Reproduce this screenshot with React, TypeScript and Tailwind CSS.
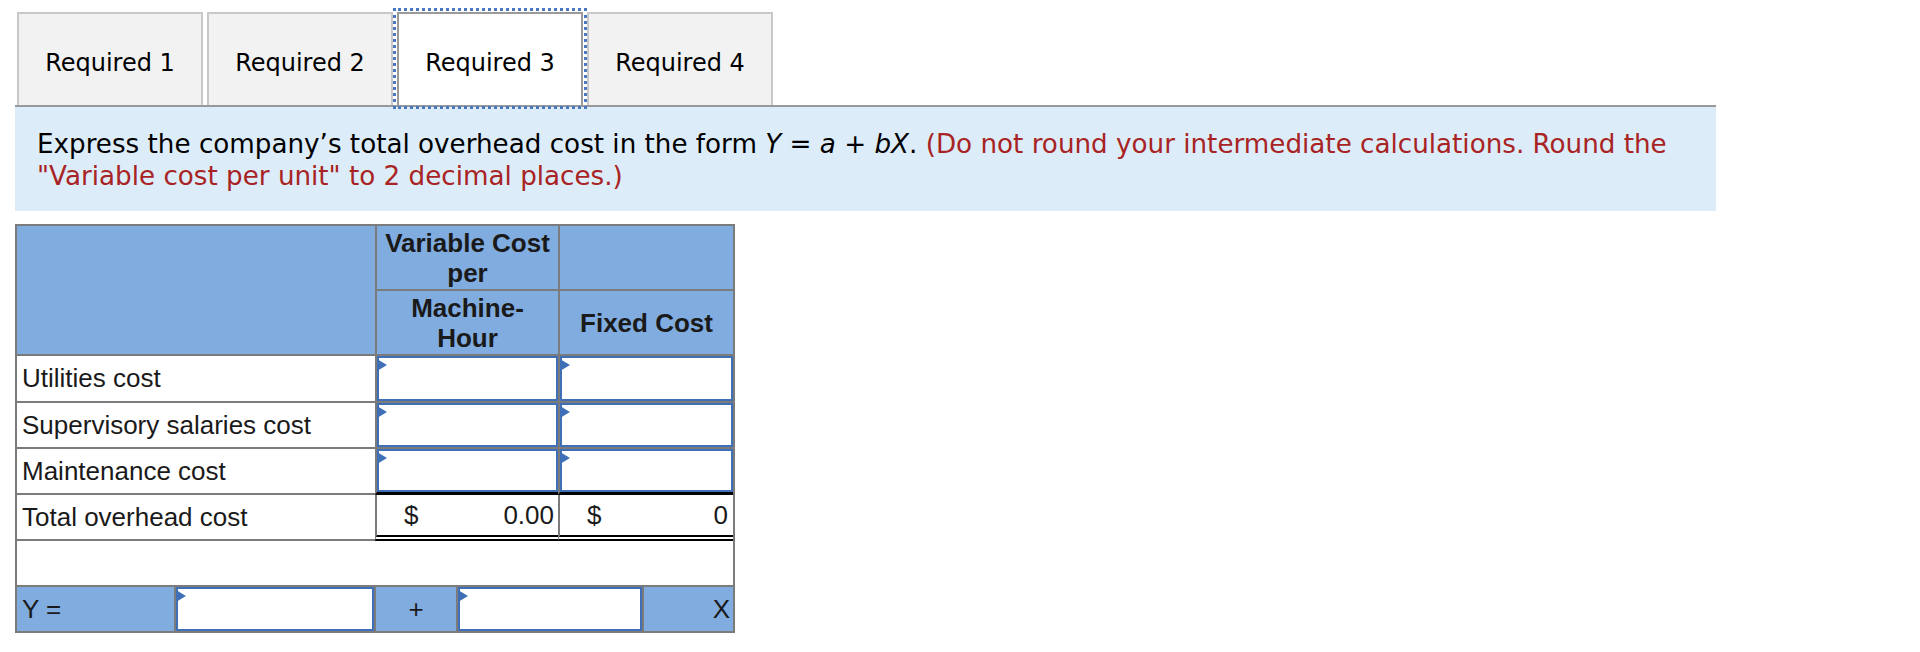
import React from "react";

const TABS = ["Required 1", "Required 2", "Required 3", "Required 4"];
const ROWS = ["Utilities cost", "Supervisory salaries cost", "Maintenance cost"];

function InputBox() {
  return (
    <div className="relative h-full w-full bg-white border-2 border-[#3f6fb6]">
      <span className="absolute -left-[2px] top-[1px] w-0 h-0 border-y-[6px] border-y-transparent border-l-[10px] border-l-[#3f6fb6]" />
    </div>
  );
}

export default function App() {
  return (
    <div className="min-h-screen bg-white pl-[15px] pt-[12px]">
      {/* tab strip */}
      <div className="w-[1701px]">
        <div className="flex gap-[4px] pl-[2px] border-b-2 border-[#999999]">
          {TABS.map((t, i) => (
            <div
              key={t}
              className={
                i === 2
                  ? "w-[186px] h-[93px] pt-[6px] flex items-center justify-center bg-white border-2 border-b-0 border-[#9a9a9a] outline-[3px] outline-dotted outline-[#4a78c0] outline-offset-[1px]"
                  : "w-[186px] h-[93px] pt-[6px] flex items-center justify-center bg-[#f2f2f2] border-2 border-b-0 border-[#c8c8c8]"
              }
            >
              <span className="font-['DejaVu_Sans',sans-serif] text-[24px] text-black">{t}</span>
            </div>
          ))}
        </div>

        {/* instructions */}
        <div className="bg-[#ddecf9] h-[104px] pl-[22px] pt-[21px] font-['DejaVu_Sans',sans-serif] text-[26.2px] leading-[32px] text-black">
          Express the company’s total overhead cost in the form <i>Y</i> = <i>a</i> + <i>bX</i>.{" "}
          <span className="text-[#a82424]">
            (Do not round your intermediate calculations. Round the
            <br />
            "Variable cost per unit" to 2 decimal places.)
          </span>
        </div>
      </div>

      {/* worksheet */}
      <div className="mt-[13px] w-[720px] border-2 border-[#7b7b7b] font-['Liberation_Sans',Arial,sans-serif] text-[26px] text-[#1a1a1a]">
        <div className="flex bg-[#80ace0] border-b-2 border-[#7b7b7b] font-bold leading-[30px] text-center">
          <div className="w-[358px]" />
          <div className="w-[183px] border-l-2 border-[#7b7b7b] flex flex-col">
            <div className="h-[63px] flex items-center justify-center">
              Variable Cost
              <br />
              per
            </div>
            <div className="h-[65px] border-t-2 border-[#7b7b7b] flex items-center justify-center">
              Machine-
              <br />
              Hour
            </div>
          </div>
          <div className="flex-1 border-l-2 border-[#7b7b7b] flex flex-col">
            <div className="h-[63px]" />
            <div className="h-[65px] border-t-2 border-[#7b7b7b] flex items-center justify-center">Fixed Cost</div>
          </div>
        </div>

        {ROWS.map((r, i) => {
          const last = i === ROWS.length - 1;
          const numBorder = last ? "border-b-[3px] border-b-black" : "border-b-2 border-b-[#7b7b7b]";
          return (
            <div key={r} className={i === 0 ? "flex h-[47px]" : "flex h-[46px]"}>
              <div className="w-[358px] border-b-2 border-[#7b7b7b] flex items-center pl-[5px]">{r}</div>
              <div className={`w-[183px] border-l-2 border-l-[#7b7b7b] ${numBorder}`}>
                <InputBox />
              </div>
              <div className={`flex-1 border-l-2 border-l-[#7b7b7b] ${numBorder}`}>
                <InputBox />
              </div>
            </div>
          );
        })}

        <div className="flex h-[46px]">
          <div className="w-[358px] border-b-2 border-[#7b7b7b] flex items-center pl-[5px]">Total overhead cost</div>
          <div className="w-[183px] border-l-2 border-l-[#7b7b7b] border-b-[6px] border-b-black border-double flex items-center justify-between pl-[27px] pr-[4px]">
            <span>$</span>
            <span>0.00</span>
          </div>
          <div className="flex-1 border-l-2 border-l-[#7b7b7b] border-b-[6px] border-b-black border-double flex items-center justify-between pl-[27px] pr-[5px]">
            <span>$</span>
            <span>0</span>
          </div>
        </div>

        <div className="h-[46px] border-b-2 border-[#7b7b7b]" />

        <div className="flex h-[44px] bg-[#80ace0]">
          <div className="w-[157px] flex items-center pl-[5px]">Y =</div>
          <div className="w-[200px] border-l-2 border-[#7b7b7b]">
            <InputBox />
          </div>
          <div className="w-[82px] border-l-2 border-[#7b7b7b] flex items-center justify-center">+</div>
          <div className="w-[186px] border-l-2 border-[#7b7b7b]">
            <InputBox />
          </div>
          <div className="flex-1 border-l-2 border-[#7b7b7b] flex items-center justify-end pr-[3px]">X</div>
        </div>
      </div>
    </div>
  );
}
